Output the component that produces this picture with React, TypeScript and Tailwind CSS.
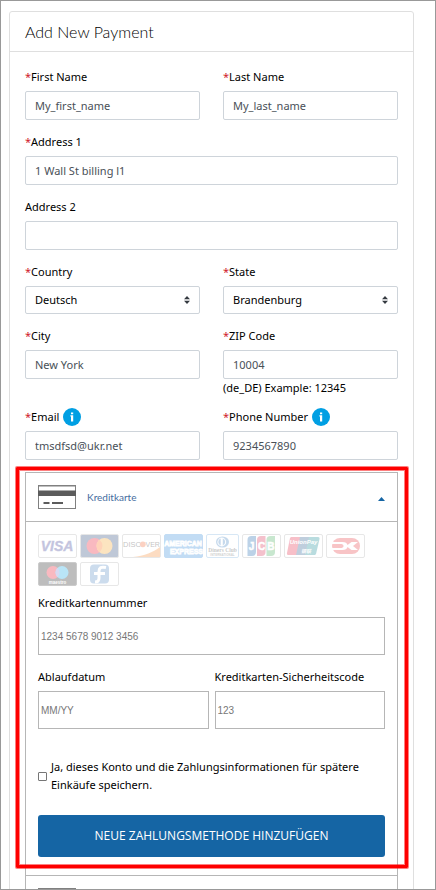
import type { ReactNode } from "react";

const fieldBox =
  "block w-full rounded-[2px] border border-[#ced4da] bg-white px-[9px] outline-none";

function Label({ id, text, required, info }: { id: string; text: string; required?: boolean; info?: boolean }) {
  return (
    <div className="flex h-5 items-center gap-1">
      <label htmlFor={id} className="text-black">
        {required && <span className="text-[#d0202a]">*</span>}
        {text}
      </label>
      {info && (
        <button type="button" aria-label={`About ${text}`} className="shrink-0">
          <svg viewBox="0 0 18 18" className="block size-[18px]">
            <circle cx="9" cy="9" r="9" fill="#009fe3" />
            <path d="M8 4.500h2.200v1.800H8zM7.400 7.200h2.800v6.300H8V8.500h-.6z" fill="#fff" />
          </svg>
        </button>
      )}
    </div>
  );
}

type FieldProps = { id: string; text: string; value: string; required?: boolean; info?: boolean; hint?: string };

function TextField({ id, text, value, required, info, hint }: FieldProps) {
  return (
    <div className="min-w-0 flex-1">
      <Label id={id} text={text} required={required} info={info} />
      <input id={id} type="text" defaultValue={value} className={`${fieldBox} mt-1 h-[29px] text-[#495057]`} />
      {hint && <p className="-mb-0.5 leading-[18px] text-black">{hint}</p>}
    </div>
  );
}

function SelectField({ id, text, value }: FieldProps) {
  return (
    <div className="min-w-0 flex-1">
      <Label id={id} text={text} required />
      <div className="relative mt-1">
        <select id={id} defaultValue={value} className={`${fieldBox} h-7 appearance-none text-black`}>
          <option>{value}</option>
        </select>
        <svg viewBox="0 0 6 8" className="pointer-events-none absolute top-[10px] right-[10px] h-2 w-1.5">
          <path d="M0 3.2L3 0l3 3.2zM0 4.8L3 8l3-3.2z" fill="#343a40" />
        </svg>
      </div>
    </div>
  );
}

function Row({ children }: { children: ReactNode }) {
  return <div className="flex gap-[23px]">{children}</div>;
}

function Badge({ label, fill = "#fff", stroke = "#a8a8a8", narrow, children }: { label: string; fill?: string; stroke?: string; narrow?: boolean; children: ReactNode }) {
  return (
    <svg
      role="img"
      aria-label={label}
      viewBox={narrow ? "0 0 33 24" : "0 0 39 24"}
      className={narrow ? "h-6 w-[33px] shrink-0" : "h-6 w-[39px] shrink-0"}
      fontFamily="'Liberation Sans', sans-serif"
      fontWeight="bold"
    >
      <rect x="0.5" y="0.5" width={narrow ? 32 : 38} height="23" rx="1.5" fill={fill} stroke={stroke} />
      {children}
    </svg>
  );
}

function CardBadges() {
  return (
    <div className="flex flex-wrap gap-x-[3px] gap-y-1 opacity-[0.27]">
      <Badge label="Visa">
        <text x="19" y="17" fontSize="14" fontStyle="italic" textAnchor="middle" fill="#25288a" stroke="#25288a" strokeWidth="0.4">VISA</text>
      </Badge>
      <Badge label="Mastercard" fill="#16366f">
        <circle cx="14.500" cy="12" r="8" fill="#eb001b" />
        <circle cx="24.500" cy="12" r="8" fill="#f79e1b" />
        <path d="M19.500 5.800a8 8 0 0 1 0 12.400a8 8 0 0 1 0-12.400z" fill="#ff5f00" />
      </Badge>
      <Badge label="Discover">
        <path d="M38 13v10H11C22 22 32 18 38 13z" fill="#f58220" />
        <text x="1" y="13" fontSize="7.500" fontWeight="normal" fill="#222">DISC</text>
        <circle cx="20.800" cy="10.300" r="2.900" fill="#f15a22" />
        <text x="23.500" y="13" fontSize="7" fontWeight="normal" fill="#222">VER</text>
      </Badge>
      <Badge label="American Express" fill="#2080d8" stroke="#2080d8">
        <text x="19" y="11.500" fontSize="7" textAnchor="middle" fill="#7db5ea" stroke="#fff" strokeWidth="0.8">AMERICAN</text>
        <text x="22.500" y="20" fontSize="7" textAnchor="middle" fill="#7db5ea" stroke="#fff" strokeWidth="0.8">EXPRESS</text>
      </Badge>
      <Badge label="Diners Club" stroke="#70aadd" narrow>
        <ellipse cx="16.500" cy="8" rx="6.500" ry="5.500" fill="#2f77bd" />
        <circle cx="15.800" cy="8" r="4.400" fill="#fff" />
        <path d="M14.700 4.600a3.600 3.600 0 0 0 0 6.800zM16.800 4.600a3.600 3.600 0 0 1 0 6.800z" fill="#2f77bd" />
        <text x="16.500" y="18" fontSize="5.500" fontFamily="'Liberation Serif', serif" textAnchor="middle" fill="#333">Diners Club</text>
        <text x="16.500" y="21.500" fontSize="3" textAnchor="middle" fill="#555">INTERNATIONAL</text>
      </Badge>
      <Badge label="JCB">
        <path d="M9.500 2H14v16a4 4 0 0 1-4 4H5.500V6a4 4 0 0 1 4-4z" fill="#0b5caa" />
        <path d="M19 2h4.500v16a4 4 0 0 1-4 4H15V6a4 4 0 0 1 4-4z" fill="#d71f48" />
        <path d="M28.500 2H33v16a4 4 0 0 1-4 4h-4.500V6a4 4 0 0 1 4-4z" fill="#38a852" />
        <g fontSize="10" textAnchor="middle" fill="#fff" stroke="#fff" strokeWidth="0.5">
          <text x="9.500" y="15.500">J</text>
          <text x="19.500" y="15.500">C</text>
          <text x="28.800" y="15.500">B</text>
        </g>
      </Badge>
      <Badge label="UnionPay">
        <path d="M7 3h11l-4 18H4.500a1.500 1.500 0 0 1-1.500-2L6 4z" fill="#e21836" />
        <path d="M16 3h11l-4 18H12z" fill="#174f85" />
        <path d="M25 3h9a1.500 1.500 0 0 1 1.500 2L32 20l-1 1H21z" fill="#00818a" />
        <text x="19.500" y="10" fontSize="6" fontStyle="italic" textAnchor="middle" fill="#fff">UnionPay</text>
        <text x="22" y="19" fontSize="5" fontStyle="italic" fontFamily="'Noto Sans CJK SC', sans-serif" textAnchor="middle" fill="#fff">银联</text>
      </Badge>
      <Badge label="Dankort">
        <rect x="6" y="4" width="28" height="16" rx="8" fill="#e62a32" />
        <path d="M6 8h10.500c3 0 4.500 1 5 3l4-3h6.500l-5 4 5 4h-6.500l-4-3c-.5 2-2 3-5 3H6v-2h8c2.500 0 3.500-.5 3.500-2S16.500 10 14 10H6z" fill="#fff" />
      </Badge>
      <Badge label="Maestro" fill="#111" stroke="#444">
        <circle cx="15" cy="10.500" r="6.500" fill="#eb001b" />
        <circle cx="24" cy="10.500" r="6.500" fill="#00a2e5" />
        <path d="M19.500 5.800a6.500 6.500 0 0 1 0 9.400a6.500 6.500 0 0 1 0-9.400z" fill="#7375cf" />
        <text x="19.500" y="21.500" fontSize="4.500" textAnchor="middle" fill="#fff">maestro</text>
      </Badge>
      <Badge label="Forbrugsforeningen">
        <rect x="10" y="2.500" width="19" height="19" rx="4" fill="#477fc0" />
        <path d="M26 5.500c-5-1-7 0-7 4V16c0 2.500-1 4-4 4M14 11.500h11" fill="none" stroke="#fff" strokeWidth="3" />
      </Badge>
    </div>
  );
}

function CardIcon() {
  return (
    <svg viewBox="0 0 38 24" className="block h-6 w-[38px] shrink-0" aria-hidden="true">
      <rect x="0.5" y="0.5" width="37" height="23" fill="#fff" stroke="#808080" />
      <path d="M0 0h38v1.500H0z" fill="#808080" />
      <path d="M0 5.500h38v5.500H0z" fill="#5c5c5c" />
      <path d="M5.500 17h6v2h-6zM14 17h11v2H14z" fill="#5c5c5c" />
    </svg>
  );
}

function PayField({ id, text, placeholder }: { id: string; text: string; placeholder: string }) {
  return (
    <div className="min-w-0 flex-1">
      <Label id={id} text={text} />
      <input
        id={id}
        type="text"
        placeholder={placeholder}
        className="mt-1 block h-[38px] w-full border border-[#b6b6b6] bg-white px-0.5 font-['Liberation_Sans',Arial,sans-serif] text-[10px] outline-none placeholder:text-[#777]"
      />
    </div>
  );
}

export default function App() {
  return (
    <main className="h-screen overflow-hidden border border-[#999] bg-white pt-[10px] pr-[21px] pl-2 font-['Noto_Sans','Open_Sans',sans-serif] text-[11px] leading-[18px]">
      <section className="rounded-t-[3px] border border-[#dfdfdf]">
        <h1 className="flex h-10 items-center border-b border-[#dfdfdf] px-[15px] font-['Lato',sans-serif] text-[16px] font-light text-black">
          Add New Payment
        </h1>
        <form className="flex flex-col px-[15px] pt-[15px]" onSubmit={(e) => e.preventDefault()}>
          <div className="flex flex-col gap-3">
            <Row>
              <TextField id="first" text="First Name" value="My_first_name" required />
              <TextField id="last" text="Last Name" value="My_last_name" required />
            </Row>
            <TextField id="address1" text="Address 1" value="1 Wall St billing l1" required />
            <TextField id="address2" text="Address 2" value="" />
            <Row>
              <SelectField id="country" text="Country" value="Deutsch" />
              <SelectField id="state" text="State" value="Brandenburg" />
            </Row>
            <Row>
              <TextField id="city" text="City" value="New York" required />
              <TextField id="zip" text="ZIP Code" value="10004" required hint="(de_DE) Example: 12345" />
            </Row>
            <Row>
              <TextField id="email" text="Email" value="tmsdfsd@ukr.net" required info />
              <TextField id="phone" text="Phone Number" value="9234567890" required info />
            </Row>
          </div>

          <div className="mt-3 border border-[#b6b6b6]">
            <div className="relative border-b border-[#b6b6b6]">
              <button type="button" aria-expanded="true" className="flex h-[49px] w-full items-center border-b border-[#b6b6b6] px-3">
                <CardIcon />
                <span className="ml-[11px] font-['Lato',sans-serif] text-[10px] text-[#456da0]">Kreditkarte</span>
                <svg viewBox="0 0 7 4" className="mt-1 ml-auto h-1 w-[7px]">
                  <path d="M0 4L3.500 0 7 4z" fill="#1565a4" />
                </svg>
              </button>
              <div className="px-3 pt-3 pb-[18px]">
                <CardBadges />
                <div className="mt-[7px] flex flex-col gap-3">
                  <PayField id="number" text="Kreditkartennummer" placeholder="1234 5678 9012 3456" />
                  <div className="flex gap-1.5">
                    <PayField id="expiry" text="Ablaufdatum" placeholder="MM/YY" />
                    <PayField id="code" text="Kreditkarten-Sicherheitscode" placeholder="123" />
                  </div>
                </div>
                <div className="mt-[29px] flex items-center gap-1">
                  <input id="save" type="checkbox" className="size-[9px] shrink-0 appearance-none rounded-[1px] border border-[#767676] bg-white checked:bg-[#1565a4]" />
                  <label htmlFor="save" className="text-black">
                    Ja, dieses Konto und die Zahlungsinformationen für spätere Einkäufe speichern.
                  </label>
                </div>
                <button type="submit" className="mt-[21px] block h-[42px] w-full rounded-[3px] bg-[#1565a4] font-['Open_Sans',sans-serif] text-[12px] text-white">
                  NEUE ZAHLUNGSMETHODE HINZUFÜGEN
                </button>
              </div>
              <div className="pointer-events-none absolute -top-[6px] -right-[11px] bottom-[7px] -left-[10px] rounded-[1px] border-3 border-[#fe0000] shadow-[0_0_0_1px_rgba(254,0,0,0.5),inset_0_0_0_1px_rgba(254,0,0,0.5)]" />
            </div>
            <button type="button" aria-label="Payment method" aria-expanded="false" className="flex h-12 w-full items-center px-3">
              <CardIcon />
            </button>
          </div>
        </form>
      </section>
    </main>
  );
}
